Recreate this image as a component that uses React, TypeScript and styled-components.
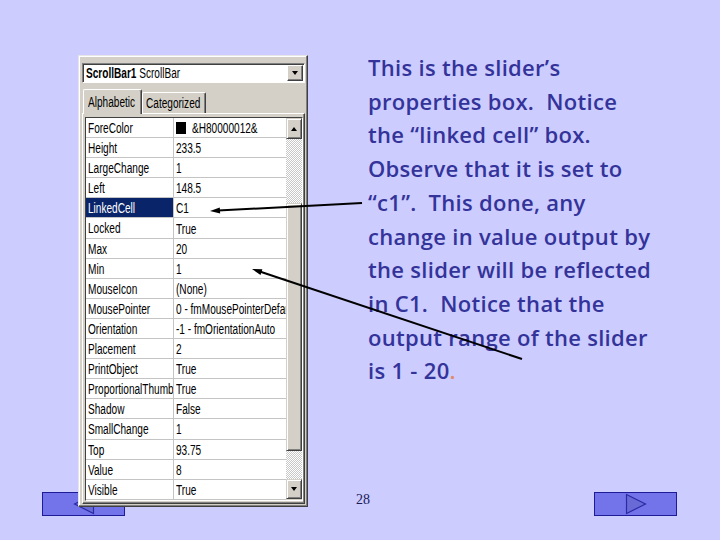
import React from 'react'
import styled, { createGlobalStyle } from 'styled-components'

const GlobalStyle = createGlobalStyle`
  html, body {
    margin: 0;
    padding: 0;
    background: #ccccff;
  }
  body {
    width: 720px;
    height: 540px;
    overflow: hidden;
  }
`

type Prop = { name: string; value: string; selected?: boolean; swatch?: boolean }

const properties: Prop[] = [
  { name: 'ForeColor', value: '&H80000012&', swatch: true },
  { name: 'Height', value: '233.5' },
  { name: 'LargeChange', value: '1' },
  { name: 'Left', value: '148.5' },
  { name: 'LinkedCell', value: 'C1', selected: true },
  { name: 'Locked', value: 'True' },
  { name: 'Max', value: '20' },
  { name: 'Min', value: '1' },
  { name: 'MouseIcon', value: '(None)' },
  { name: 'MousePointer', value: '0 - fmMousePointerDefault' },
  { name: 'Orientation', value: '-1 - fmOrientationAuto' },
  { name: 'Placement', value: '2' },
  { name: 'PrintObject', value: 'True' },
  { name: 'ProportionalThumb', value: 'True' },
  { name: 'Shadow', value: 'False' },
  { name: 'SmallChange', value: '1' },
  { name: 'Top', value: '93.75' },
  { name: 'Value', value: '8' },
  { name: 'Visible', value: 'True' },
]

const lines = [
  'This is the slider’s',
  'properties box.  Notice',
  'the “linked cell” box.',
  'Observe that it is set to',
  '“c1”.  This done, any',
  'change in value output by',
  'the slider will be reflected',
  'in C1.  Notice that the',
  'output range of the slider',
]

const App = () => {
  return (
    <>
      <GlobalStyle />
      <Slide>
        <Main>
          <PropertiesWindow>
            <Combo>
              <ComboText>
                <Narrow>
                  <b>ScrollBar1</b> ScrollBar
                </Narrow>
              </ComboText>
              <DropButton>
                <Arrow $dir="down" />
              </DropButton>
            </Combo>
            <TabStrip>
              <Tab $active $width={59}>
                <Narrow>Alphabetic</Narrow>
              </Tab>
              <Tab $width={64}>
                <Narrow>Categorized</Narrow>
              </Tab>
            </TabStrip>
            <TabPage>
              <Grid>
                <Rows>
                  {properties.map((p) => (
                    <Row key={p.name}>
                      <NameCell $selected={p.selected}>
                        <Narrow>{p.name}</Narrow>
                      </NameCell>
                      <ValueCell>
                        {p.swatch && <Swatch />}
                        <Narrow>{p.value}</Narrow>
                      </ValueCell>
                    </Row>
                  ))}
                </Rows>
                <ScrollBar>
                  <ScrollButton $height={21}>
                    <Arrow $dir="up" />
                  </ScrollButton>
                  <Track $height={64} />
                  <Thumb />
                  <Track $height={28} />
                  <ScrollButton $height={20}>
                    <Arrow $dir="down" />
                  </ScrollButton>
                </ScrollBar>
              </Grid>
            </TabPage>
          </PropertiesWindow>
          <Notes>
            {lines.map((l) => (
              <Line key={l}>{l}</Line>
            ))}
            <Line>
              is 1 - 20<Accent>.</Accent>
            </Line>
          </Notes>
        </Main>
        <Footer>
          <NavButton>
            <svg width="22" height="22" viewBox="0 0 22 22">
              <polygon points="1.5,11 20.5,1.5 20.5,20.5" fill="#6a6ad6" stroke="#2a2aa6" strokeWidth="1.2" />
            </svg>
          </NavButton>
          <PageNumber>28</PageNumber>
          <NavButton>
            <svg width="22" height="22" viewBox="0 0 22 22">
              <polygon points="1.5,1.5 20.5,11 1.5,20.5" fill="#6a6ad6" stroke="#2a2aa6" strokeWidth="1.2" />
            </svg>
          </NavButton>
        </Footer>
        <Callouts viewBox="0 0 720 540">
          <line x1="362" y1="203" x2="218" y2="210.6" stroke="#000" strokeWidth="2" />
          <polygon points="210,211 220.2,213.6 219.8,207.5" fill="#000" />
          <line x1="522" y1="359" x2="259" y2="271.3" stroke="#000" strokeWidth="2" />
          <polygon points="252,269 262.4,269.3 260.5,275" fill="#000" />
        </Callouts>
      </Slide>
    </>
  )
}

export default App

const Slide = styled.div`
  position: relative;
  width: 720px;
  height: 540px;
  background: #ccccff;
  display: flex;
  flex-direction: column;
  overflow: hidden;
`

const Main = styled.div`
  display: flex;
  align-items: flex-start;
  padding: 51px 0 0 78px;
`

const PropertiesWindow = styled.div`
  position: relative;
  z-index: 1;
  margin-top: 4px;
  width: 230px;
  height: 452px;
  box-sizing: border-box;
  display: flex;
  flex-direction: column;
  padding: 7px 2px 0 2px;
  background: #d4d0c8;
  border: 1px solid;
  border-color: #e6e6e6 #404040 #404040 #e6e6e6;
  box-shadow: inset -1px -1px #808080, inset 1px 1px #ffffff;
  font-family: "Liberation Sans", Arial, sans-serif;
  font-size: 14px;
  color: #000;
`

/* the dialog font of the screenshot is a tall, tight bitmap face */
const Narrow = styled.span`
  display: inline-block;
  white-space: nowrap;
  transform: scaleX(0.72);
  transform-origin: left center;
`

const Combo = styled.div`
  display: flex;
  align-items: center;
  height: 20px;
  box-sizing: border-box;
  margin-left: 1px;
  padding: 0 1px 0 3px;
  background: #fff;
  border: 1px solid;
  border-color: #808080 #ffffff #ffffff #808080;
  box-shadow: inset 1px 1px #404040;
`

const ComboText = styled.span`
  flex: 1;
  min-width: 0;
  overflow: hidden;
  line-height: 18px;
  b {
    font-weight: 700;
  }
`

const DropButton = styled.div`
  width: 16px;
  height: 16px;
  box-sizing: border-box;
  display: flex;
  align-items: center;
  justify-content: center;
  background: #d4d0c8;
  border: 1px solid;
  border-color: #ffffff #404040 #404040 #ffffff;
  box-shadow: inset -1px -1px #808080;
`

const Arrow = styled.span<{ $dir: 'up' | 'down' }>`
  width: 0;
  height: 0;
  border-left: 3.5px solid transparent;
  border-right: 3.5px solid transparent;
  ${(p) => (p.$dir === 'up' ? 'border-bottom: 4px solid #000;' : 'border-top: 4px solid #000;')}
`

const TabStrip = styled.div`
  display: flex;
  align-items: flex-end;
  height: 24px;
  margin-top: 6px;
  padding-left: 2px;
  position: relative;
  z-index: 1;
`

const Tab = styled.div<{ $active?: boolean; $width: number }>`
  box-sizing: border-box;
  width: ${(p) => p.$width}px;
  height: ${(p) => (p.$active ? 25 : 21)}px;
  margin-bottom: ${(p) => (p.$active ? -1 : 0)}px;
  padding: ${(p) => (p.$active ? '3px 4px 0' : '1px 3px 0')};
  background: #d4d0c8;
  border: 1px solid;
  border-bottom: none;
  border-color: #ffffff #404040 #404040 #ffffff;
  box-shadow: inset -1px 0 #808080;
  border-radius: 2px 2px 0 0;
  overflow: hidden;
  line-height: 18px;
`

const TabPage = styled.div`
  flex: 1;
  box-sizing: border-box;
  margin: 0 0 2px 1px;
  padding: 3px 1px 0 2px;
  border: 1px solid;
  border-color: #ffffff #404040 #404040 #ffffff;
  box-shadow: inset -1px -1px #808080;
`

const Grid = styled.div`
  display: flex;
  height: 384px;
  box-sizing: border-box;
  border: 1px solid;
  border-color: #404040 #ffffff #ffffff #404040;
  overflow: hidden;
`

const Rows = styled.div`
  flex: 1;
  min-width: 0;
  background: #fff;
`

const Row = styled.div`
  display: grid;
  grid-template-columns: 88px 1fr;
  height: 20.1px;
  box-sizing: border-box;
  border-bottom: 1px solid #c4c4c4;
`

const NameCell = styled.div<{ $selected?: boolean }>`
  padding: 1px 0 0 2px;
  border-right: 1px solid #c4c4c4;
  overflow: hidden;
  line-height: 18px;
  background: ${(p) => (p.$selected ? '#0a246a' : 'transparent')};
  color: ${(p) => (p.$selected ? '#fff' : '#000')};
`

const ValueCell = styled.div`
  display: flex;
  align-items: center;
  padding: 1px 0 0 2px;
  overflow: hidden;
  line-height: 18px;
`

const Swatch = styled.span`
  width: 10px;
  height: 12px;
  margin-right: 6px;
  background: #000;
  flex-shrink: 0;
`

const ScrollBar = styled.div`
  width: 16px;
  display: flex;
  flex-direction: column;
  flex-shrink: 0;
`

const ScrollButton = styled.div<{ $height: number }>`
  height: ${(p) => p.$height}px;
  box-sizing: border-box;
  display: flex;
  align-items: center;
  justify-content: center;
  background: #d4d0c8;
  border: 1px solid;
  border-color: #d4d0c8 #404040 #404040 #d4d0c8;
  box-shadow: inset 1px 1px #ffffff, inset -1px -1px #808080;
`

const Track = styled.div<{ $height: number }>`
  height: ${(p) => p.$height}px;
  background: repeating-conic-gradient(#ffffff 0 25%, #c8c8c8 0 50%) 0 0 / 2px 2px;
`

const Thumb = styled.div`
  height: 248px;
  box-sizing: border-box;
  background: #d4d0c8;
  border: 1px solid;
  border-color: #d4d0c8 #404040 #404040 #d4d0c8;
  box-shadow: inset 1px 1px #ffffff, inset -1px -1px #808080;
`

const Notes = styled.div`
  margin-left: 60px;
  font-family: "Open Sans", Lato, sans-serif;
  font-size: 22px;
  font-weight: 600;
  letter-spacing: 0.3px;
  line-height: 33.7px;
  color: #333399;
`

const Line = styled.div`
  white-space: pre;
`

const Accent = styled.span`
  color: #e08a6a;
`

const Footer = styled.div`
  display: flex;
  align-items: flex-start;
  margin-top: -15px;
  padding: 0 43px 0 42px;
`

const NavButton = styled.div`
  width: 83px;
  height: 24px;
  box-sizing: border-box;
  display: flex;
  align-items: center;
  justify-content: center;
  background: #7474ea;
  border: 1px solid #1c1c99;
  &:last-child {
    margin-left: auto;
  }
`

const PageNumber = styled.div`
  margin-left: 231px;
  font-family: "Liberation Serif", serif;
  font-size: 14px;
  line-height: 14px;
  padding-top: 1px;
  color: #1a1a5a;
`

const Callouts = styled.svg`
  position: absolute;
  inset: 0;
  width: 720px;
  height: 540px;
  z-index: 2;
  pointer-events: none;
`
